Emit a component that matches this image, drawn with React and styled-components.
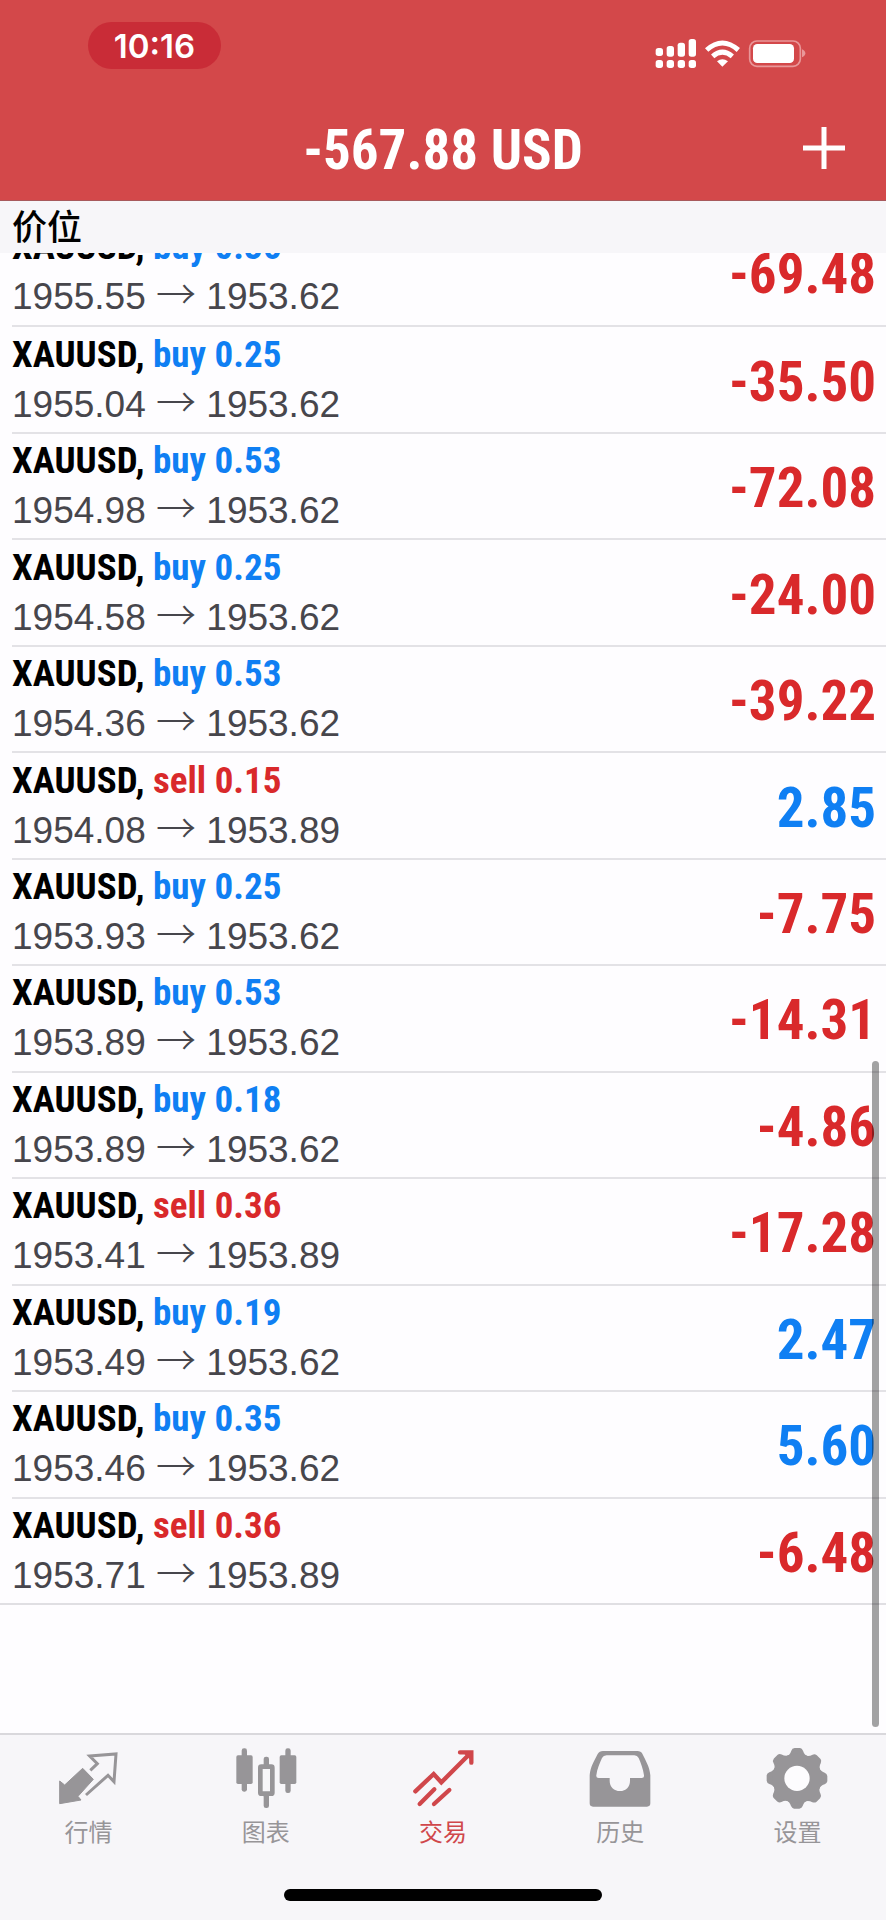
import React, { useState } from 'react';
import styled, { createGlobalStyle } from 'styled-components';

const RED = '#d9292b';
const BLUE = '#0f7ff3';
const CONDENSED = '"Roboto Condensed", "Liberation Sans", "Noto Sans CJK SC", sans-serif';

const GlobalStyle = createGlobalStyle`
  * {
    box-sizing: border-box;
  }

  body {
    margin: 0;
    font-family: "Liberation Sans", "Noto Sans CJK SC", sans-serif;
    background: #fefdff;
  }

  button {
    padding: 0;
    border: 0;
    background: none;
    font: inherit;
    color: inherit;
  }

  svg {
    display: block;
  }
`;

const Screen = styled.div`
  height: 100vh;
  display: flex;
  flex-direction: column;
  overflow: hidden;
`;

const Header = styled.header`
  background: #d3484a;
  color: #fff;
  border-bottom: 1px solid #a8595c;
`;

const StatusBar = styled.div`
  display: flex;
  justify-content: space-between;
  height: 98px;
  padding: 22px 80px 0 88px;
`;

const Clock = styled.time`
  width: 133px;
  height: 47px;
  border-radius: 24px;
  background: #c92c37;
  font: 600 33px/49px Inter, sans-serif;
  text-align: center;
`;

const StatusIcons = styled.div`
  display: flex;
  gap: 8px;
  margin-top: 16px;
`;

const NavBar = styled.div`
  display: grid;
  grid-template-columns: 1fr auto 1fr;
  align-items: center;
  height: 102px;
  padding: 0 40px;
`;

const Balance = styled.h1`
  grid-column: 2;
  margin: 0;
  padding-top: 2px;
  font: bold 55px/64px ${CONDENSED};
`;

const AddButton = styled.button`
  justify-self: end;
  padding-bottom: 2px;
`;

const SectionTitle = styled.h2`
  margin: 0;
  padding: 2px 12px 0;
  background: #f7f6f9;
  color: #000;
  font-size: 35px;
  font-weight: 500;
  line-height: 50px;
`;

/* content is pinned to the bottom, older rows run out above */
const ScrollArea = styled.main`
  position: relative;
  flex: 1;
  min-height: 0;
  display: flex;
  flex-direction: column;
  justify-content: flex-end;
  overflow: hidden;
  padding-bottom: 128px;
`;

const ScrollThumb = styled.div`
  position: absolute;
  right: 7px;
  bottom: 6px;
  width: 7px;
  height: 45%;
  border-radius: 4px;
  background: rgba(0, 0, 0, 0.36);
`;

const Positions = styled.ul`
  flex: none;
  display: grid;
  grid-auto-rows: 1fr;
  height: 1386px;
  margin: 0;
  padding: 0;
  list-style: none;
  border-bottom: 2px solid #e0dfe3;
`;

const Row = styled.li`
  display: flex;
  align-items: center;
  justify-content: space-between;
  margin-left: 12px;
  padding-right: 10px;

  & + & {
    border-top: 2px solid #e3e2e6;
  }
`;

const Deal = styled.div`
  font: bold 37px/50px ${CONDENSED};
  color: #000;
`;

const Side = styled.span`
  color: ${({ $side }) => ($side === 'buy' ? BLUE : RED)};
`;

const Prices = styled.div`
  font-size: 37px;
  line-height: 50px;
  color: #47464c;
`;

const Arrow = styled.span`
  font: 300 40px/32px "Noto Sans CJK SC", sans-serif;
`;

const Profit = styled.div`
  padding-top: 4px;
  font: bold 55px/64px ${CONDENSED};
  color: ${({ $loss }) => ($loss ? RED : BLUE)};
`;

const TabBar = styled.nav`
  display: grid;
  grid-template-columns: repeat(5, 1fr);
  height: 156px;
  padding-top: 13px;
  border-top: 2px solid #d9d8dc;
  background: #f7f6f9;
`;

const Tab = styled.button`
  display: flex;
  flex-direction: column;
  align-items: center;
  gap: 7px;
  height: 106px;
  font-size: 24px;
  line-height: 32px;
  color: ${({ $active }) => ($active ? '#d0474b' : '#979598')};
`;

const HomeArea = styled.footer`
  display: flex;
  justify-content: center;
  height: 31px;
  background: #f7f6f9;
`;

const HomeIndicator = styled.div`
  width: 36%;
  height: 12px;
  border-radius: 6px;
  background: #000;
`;

const positions = [
  ['buy', '0.36', '1955.55', '1953.62', '-69.48'],
  ['buy', '0.25', '1955.04', '1953.62', '-35.50'],
  ['buy', '0.53', '1954.98', '1953.62', '-72.08'],
  ['buy', '0.25', '1954.58', '1953.62', '-24.00'],
  ['buy', '0.53', '1954.36', '1953.62', '-39.22'],
  ['sell', '0.15', '1954.08', '1953.89', '2.85'],
  ['buy', '0.25', '1953.93', '1953.62', '-7.75'],
  ['buy', '0.53', '1953.89', '1953.62', '-14.31'],
  ['buy', '0.18', '1953.89', '1953.62', '-4.86'],
  ['sell', '0.36', '1953.41', '1953.89', '-17.28'],
  ['buy', '0.19', '1953.49', '1953.62', '2.47'],
  ['buy', '0.35', '1953.46', '1953.62', '5.60'],
  ['sell', '0.36', '1953.71', '1953.89', '-6.48'],
];

const SignalIcon = () => (
  <svg width="42" height="30" viewBox="0 0 126 90" fill="#fff">
    {[[30, 24], [24, 32], [14, 42], [3, 53]].map(([y, h], i) => (
      <g key={y}>
        <rect x={2 + i * 33} y={y} width="22" height={h} rx="8" />
        <rect x={2 + i * 33} y="66" width="22" height="24" rx="8" />
      </g>
    ))}
  </svg>
);

const WifiIcon = () => (
  <svg width="35" height="30" viewBox="0 0 105 90" fill="none" stroke="#fff" strokeWidth="15">
    <path d="M5 36 Q52 -6 100 36" />
    <path d="M23 55 Q52 30 82 55" />
    <path d="M36 70 Q52 58 69 70 L52 86Z" fill="#fff" stroke="none" />
  </svg>
);

const BatteryIcon = () => (
  <svg width="58" height="30" viewBox="0 0 174 90">
    <rect x="5" y="9" width="152" height="76" rx="22" fill="none" stroke="#e99799" strokeWidth="5" />
    <rect x="15" y="18" width="123" height="57" rx="13" fill="#fff" />
    <path d="M162 34 Q172 38 172 46 Q172 54 162 58Z" fill="#e99799" />
  </svg>
);

const PlusIcon = () => (
  <svg width="44" height="44" viewBox="0 0 44 44" stroke="#fff" strokeWidth="5">
    <path d="M22 1V43M1 22H43" />
  </svg>
);

const TabIcon = ({ children }) => (
  <svg width="62" height="62" viewBox="0 0 186 186" fill="currentColor">
    {children}
  </svg>
);

const QuotesIcon = () => (
  <TabIcon>
    <path d="M5 99 L20 111 L74 61 L106 94 L60 145 L69 156 L5 167Z" stroke="currentColor" strokeWidth="3" strokeLinejoin="round" />
    <path d="M97 67 L118 47 L95 24 L174 18 L168 101 L150 82 L84 141" fill="none" stroke="currentColor" strokeWidth="9" />
  </TabIcon>
);

const ChartIcon = () => (
  <TabIcon>
    <rect x="20" y="1" width="16" height="130" rx="7" />
    <rect x="4" y="22" width="49" height="86" rx="5" />
    <rect x="151" y="1" width="16" height="134" rx="7" />
    <rect x="134" y="22" width="50" height="86" rx="5" />
    <rect x="86" y="26" width="16" height="30" rx="7" />
    <rect x="86" y="138" width="16" height="42" rx="7" />
    <rect x="76" y="56" width="36" height="81" rx="3" fill="none" stroke="currentColor" strokeWidth="14" />
  </TabIcon>
);

const TradeIcon = () => (
  <TabIcon>
    <g fill="none" stroke="currentColor" strokeWidth="13" strokeLinecap="round">
      <path d="M10 130 L65 78 L88 103 L175 16" />
      <path d="M144 13 H178 V44" />
      <path d="M23 168 L67 124M66 168 L112 126" />
    </g>
    <path d="M152 13 H178 V38Z" />
  </TabIcon>
);

const HistoryIcon = () => (
  <TabIcon>
    <path
      fillRule="evenodd"
      d="M2 82 C4 56 16 38 26 18 Q31 9 42 9 H145 Q156 9 160 17 C170 38 182 56 184 82 V166 Q184 176 174 176 H12 Q2 176 2 166Z
        M53 22 Q43 22 39 30 C33 44 24 62 22 82 Q21 90 29 90 H62 V98 C62 117 75 129 93 129 C111 129 123 117 123 98 V90 H158 Q166 90 165 82 C162 62 156 46 149 30 Q145 22 136 22Z"
    />
  </TabIcon>
);

const SettingsIcon = () => (
  <TabIcon>
    {[0, 45, 90, 135, 180, 225, 270, 315].map((angle) => (
      <path
        key={angle}
        d="M60 26 Q72 21 76 8 Q78 1 86 0 H102 Q108 1 111 8 Q115 21 127 26 L110 60 H76Z"
        transform={`rotate(${angle} 93 91)`}
      />
    ))}
    <circle cx="93" cy="91" r="56" fill="none" stroke="currentColor" strokeWidth="36" />
    <circle cx="93" cy="91" r="38" fill="#fdfcfe" />
  </TabIcon>
);

const tabs = [
  { name: '行情', Icon: QuotesIcon },
  { name: '图表', Icon: ChartIcon },
  { name: '交易', Icon: TradeIcon },
  { name: '历史', Icon: HistoryIcon },
  { name: '设置', Icon: SettingsIcon },
];

function App() {
  const [activeTab, setActiveTab] = useState('交易');

  return (
    <>
      <GlobalStyle />
      <Screen>
        <Header>
          <StatusBar>
            <Clock>10:16</Clock>
            <StatusIcons>
              <SignalIcon />
              <WifiIcon />
              <BatteryIcon />
            </StatusIcons>
          </StatusBar>
          <NavBar>
            <Balance>-567.88 USD</Balance>
            <AddButton>
              <PlusIcon />
            </AddButton>
          </NavBar>
        </Header>
        <SectionTitle>价位</SectionTitle>
        <ScrollArea>
          <Positions>
            {positions.map(([side, volume, open, current, profit]) => (
              <Row key={open + volume}>
                <div>
                  <Deal>
                    XAUUSD, <Side $side={side}>{side} {volume}</Side>
                  </Deal>
                  <Prices>
                    {open} <Arrow>→</Arrow> {current}
                  </Prices>
                </div>
                <Profit $loss={profit.startsWith('-')}>{profit}</Profit>
              </Row>
            ))}
          </Positions>
          <ScrollThumb />
        </ScrollArea>
        <TabBar>
          {tabs.map(({ name, Icon }) => (
            <Tab key={name} $active={name === activeTab} onClick={() => setActiveTab(name)}>
              <Icon />
              {name}
            </Tab>
          ))}
        </TabBar>
        <HomeArea>
          <HomeIndicator />
        </HomeArea>
      </Screen>
    </>
  );
}

export default App;
